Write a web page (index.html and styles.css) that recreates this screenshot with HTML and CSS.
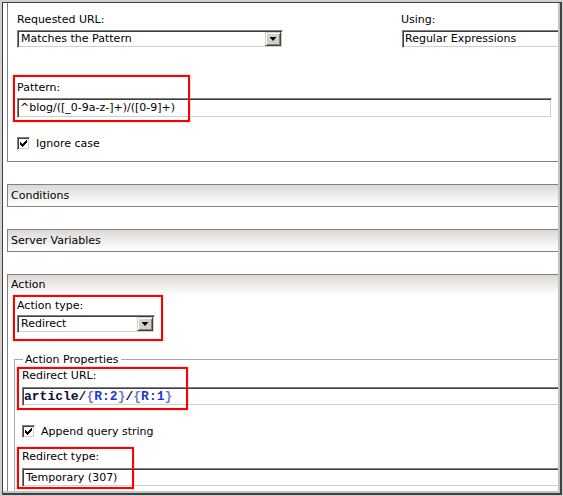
FILE: index.html
```html
<!DOCTYPE html>
<html lang="en">

<head>
  <meta charset="UTF-8">
  <title>Edit Rule</title>
  <link rel="stylesheet" href="styles.css">
</head>

<body>
  <div class="window">
    <div class="pane">
      <div class="content">

        <!-- Match URL section (top is scrolled out of view) -->
        <div class="section section-match">
          <div class="match-row">
            <div class="field">
              <div class="field-label">Requested URL:</div>
              <div class="combo combo-url">
                <span class="combo-text">Matches the Pattern</span>
                <span class="combo-btn"></span>
              </div>
            </div>
            <div class="field">
              <div class="field-label">Using:</div>
              <div class="textbox textbox-using">Regular Expressions</div>
            </div>
          </div>

          <div class="field field-pattern mark mark-pattern">
            <div class="field-label">Pattern:</div>
            <div class="textbox textbox-pattern">^blog/([_0-9a-z-]+)/([0-9]+)</div>
          </div>

          <div class="check check-ignore">
            <span class="check-box">
              <svg width="7" height="7" viewBox="0 0 7 7"><path d="M0 2 L2 4 L6 0 L7 0 L7 3 L2 7 L0 5 Z" fill="#000"/></svg>
            </span>
            <span>Ignore case</span>
          </div>
        </div>

        <div class="section-head">Conditions</div>
        <div class="section-head">Server Variables</div>

        <!-- Action section -->
        <div class="section section-action">
          <div class="section-title">Action</div>

          <div class="field field-type mark mark-type">
            <div class="field-label">Action type:</div>
            <div class="combo combo-type">
              <span class="combo-text">Redirect</span>
              <span class="combo-btn"></span>
            </div>
          </div>

          <fieldset class="props">
            <legend>Action Properties</legend>

            <div class="field field-url mark mark-url">
              <div class="field-label">Redirect URL:</div>
              <div class="textbox textbox-url">article/<span class="brace">{</span><span class="backref">R:2</span><span class="brace">}</span>/<span class="brace">{</span><span class="backref">R:1</span><span class="brace">}</span></div>
            </div>

            <div class="check check-append">
              <span class="check-box">
                <svg width="7" height="7" viewBox="0 0 7 7"><path d="M0 2 L2 4 L6 0 L7 0 L7 3 L2 7 L0 5 Z" fill="#000"/></svg>
              </span>
              <span>Append query string</span>
            </div>

            <div class="field field-rtype mark mark-rtype">
              <div class="field-label">Redirect type:</div>
              <div class="textbox textbox-rtype">Temporary (307)</div>
            </div>
          </fieldset>
        </div>

      </div>
    </div>
  </div>
</body>

</html>
```

FILE: styles.css
```css
/* Page and window frame */
body {
  margin: 0;
  font-family: "DejaVu Sans", sans-serif;
  font-size: 11px;
  color: #000;
  background: #fff;
}

.window {
  width: 563px;
  height: 496px;
  box-sizing: border-box;
  border-style: solid;
  border-width: 2px 1px 1px 2px;
  border-color: #d0d0d0;
}

.pane {
  height: 100%;
  box-sizing: border-box;
  border-style: solid;
  border-width: 1px 2px 2px 1px;
  border-color: #404040;
}

.content {
  height: 100%;
  box-sizing: border-box;
  border-style: solid;
  border-width: 0 2px 2px 0;
  border-color: #c4c4c4;
  overflow: hidden;
  background: #fff;
}

/* Sections */
.section-match {
  margin-left: 4px;
  border-left: 1px solid #808080;
  border-bottom: 1px solid #808080;
  padding: 10px 0 11px 9px;
}

.match-row {
  display: grid;
  grid-template-columns: 384px 1fr;
}

.section-head {
  margin: 22px 0 0 4px;
  height: 23px;
  box-sizing: border-box;
  border: 1px solid #808080;
  border-right: 0;
  padding-left: 3px;
  line-height: 21px;
  background: linear-gradient(#ddd8d4, #fdfdfd 90%);
}

.section-action {
  margin: 22px 0 0 4px;
  border-left: 1px solid #808080;
  border-top: 1px solid #808080;
  padding-bottom: 30px;
}

.section-title {
  height: 20px;
  line-height: 20px;
  padding-left: 3px;
  background: linear-gradient(#ddd8d4, #fdfdfd 95%);
}

/* Fields */
.field-label {
  line-height: 13px;
  white-space: nowrap;
}

.field-pattern {
  margin-top: 33px;
}

.field-type {
  margin: 4px 0 0 9px;
}

.field-url {
  margin-top: 3px;
}

.field-rtype {
  margin-top: 12px;
}

/* Sunken text boxes */
.textbox {
  box-sizing: border-box;
  border: 1px solid;
  border-color: #808080 #fff #fff #808080;
  box-shadow: inset 1px 1px #404040, inset -1px -1px #d4d0c8;
  padding: 1px 2px;
  white-space: nowrap;
  overflow: hidden;
}

.textbox-using {
  margin: 4px 0 0 1px;
  width: 200px;
  height: 18px;
  line-height: 14px;
}

.textbox-pattern {
  margin-top: 4px;
  width: 535px;
  height: 20px;
  line-height: 16px;
}

.textbox-url {
  margin-top: 5px;
  width: 600px;
  height: 19px;
  line-height: 15px;
  padding-left: 1px;
  font-family: "Liberation Mono", monospace;
  font-size: 13px;
  font-weight: bold;
  color: #101030;
}

.textbox-url .brace {
  color: #7474d8;
}

.textbox-url .backref {
  color: #1838d0;
}

.textbox-rtype {
  margin-top: 5px;
  width: 600px;
  height: 19px;
  line-height: 15px;
  padding-left: 3px;
}

/* Drop-down lists */
.combo {
  display: flex;
  margin-top: 4px;
  height: 18px;
  box-sizing: border-box;
  border: 1px solid;
  border-color: #808080 #fff #fff #808080;
  box-shadow: inset 1px 1px #404040, inset -1px -1px #d4d0c8;
  padding: 1px;
}

.combo-url {
  width: 266px;
}

.combo-type {
  width: 138px;
  margin-top: 3px;
}

.combo-text {
  flex: 1;
  padding-left: 2px;
  line-height: 14px;
  white-space: nowrap;
}

.combo-btn {
  width: 16px;
  box-sizing: border-box;
  background: #d4d0c8;
  border: 1px solid;
  border-color: #d4d0c8 #404040 #404040 #d4d0c8;
  box-shadow: inset 1px 1px #fff, inset -1px -1px #808080;
  display: flex;
  align-items: center;
  justify-content: center;
}

.combo-btn::after {
  content: "";
  width: 7px;
  height: 4px;
  background: #000;
  clip-path: polygon(0 0, 100% 0, 50% 100%);
}

/* Check boxes */
.check {
  display: flex;
  align-items: center;
  gap: 6px;
  line-height: 13px;
  white-space: nowrap;
}

.check-ignore {
  margin-top: 19px;
}

.check-append {
  margin-top: 19px;
}

.check-box {
  width: 13px;
  height: 13px;
  box-sizing: border-box;
  border: 1px solid;
  border-color: #808080 #fff #fff #808080;
  box-shadow: inset 1px 1px #404040, inset -1px -1px #d4d0c8;
  background: #fff;
  display: flex;
  align-items: center;
  justify-content: center;
}

.check-box svg {
  display: block;
  shape-rendering: crispEdges;
}

/* Action Properties group */
.props {
  margin: 20px 0 0 6px;
  padding: 0 0 30px 7px;
  border: 1px solid #a8a8a8;
  border-right: 0;
  box-shadow: inset 1px 1px #fff;
}

.props legend {
  margin-left: 1px;
  padding: 0 2px;
  line-height: 13px;
}

/* Red highlight boxes drawn over the fields */
.mark {
  position: relative;
}

.mark::after {
  content: "";
  position: absolute;
  box-sizing: border-box;
  border: 2px solid #ff0000;
  box-shadow: 0 0 1px rgba(255, 0, 0, 0.6);
}

.mark-pattern::after {
  left: -4px;
  top: -6px;
  width: 177px;
  height: 47px;
}

.mark-type::after {
  left: -4px;
  top: -4px;
  width: 150px;
  height: 46px;
}

.mark-url::after {
  left: -5px;
  top: -2px;
  width: 171px;
  height: 43px;
}

.mark-rtype::after {
  left: -5px;
  top: -3px;
  width: 117px;
  height: 42px;
}
```
